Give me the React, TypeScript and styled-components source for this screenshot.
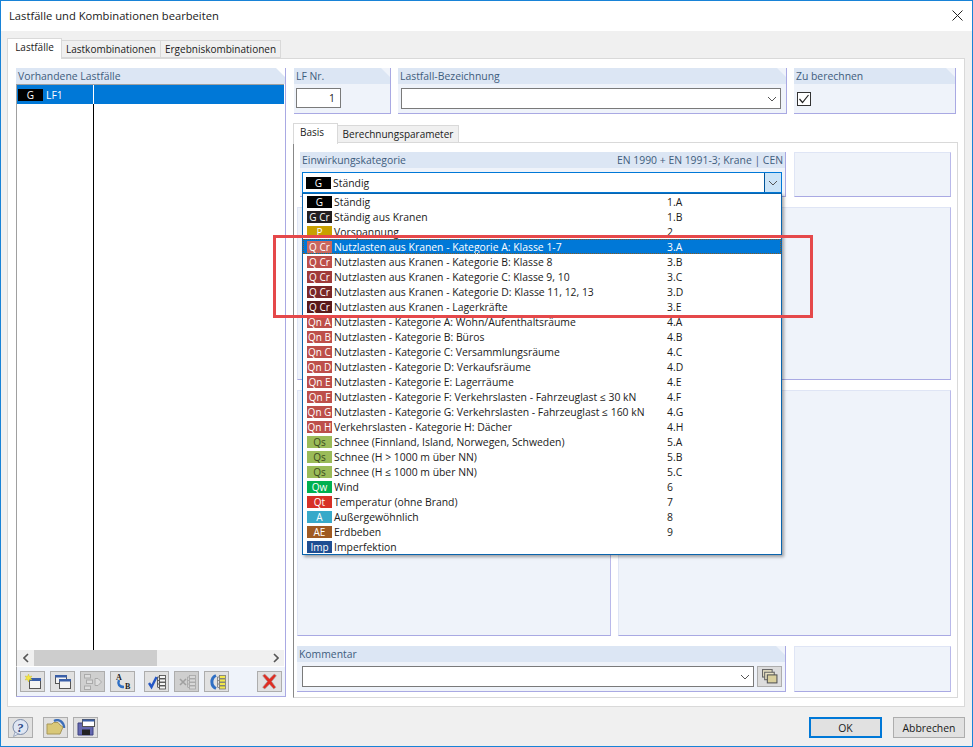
import styled, { createGlobalStyle } from "styled-components";

const GlobalStyle = createGlobalStyle`
  html, body {
    margin: 0;
    padding: 0;
    background: #f0f0f0;
  }
  * {
    box-sizing: border-box;
  }
`;

const Window = styled.div`
  position: relative;
  width: 973px;
  height: 747px;
  display: flex;
  flex-direction: column;
  background: #f0f0f0;
  border: 1px solid #1883d7;
  font-family: "Open Sans", "Liberation Sans", sans-serif;
  font-size: 10.4px;
  color: #1a1a1a;
  overflow: hidden;
`;

const TitleBar = styled.div`
  height: 30px;
  flex: none;
  display: flex;
  align-items: center;
  justify-content: space-between;
  padding: 0 9px 2px 8px;
  background: #fff;
  font-size: 11.2px;
`;

const Body = styled.div`
  flex: 1;
  display: flex;
  flex-direction: column;
  padding: 7px 7px 0 6px;
`;

const TabRow = styled.div`
  display: flex;
  align-items: flex-end;
  height: 20px;
  flex: none;
  position: relative;
  z-index: 1;
`;

const Tab = styled.div<{ $active?: boolean; $w: number }>`
  width: ${(p) => p.$w}px;
  height: ${(p) => (p.$active ? 21 : 18)}px;
  margin-bottom: ${(p) => (p.$active ? -1 : 0)}px;
  padding-top: 1px;
  text-align: center;
  font-size: 10px;
  background: ${(p) => (p.$active ? "#fff" : "#f0f0f0")};
  border: 1px solid #d9d9d9;
  border-bottom: ${(p) => (p.$active ? "none" : "1px solid #d9d9d9")};
  border-left: ${(p) => (p.$active ? "1px solid #d9d9d9" : "none")};
  white-space: nowrap;
`;

const BasisTab = styled(Tab)`
  text-align: left;
  padding-left: 6px;
`;

const OuterPane = styled.div`
  height: 649px;
  flex: none;
  display: flex;
  gap: 7px;
  padding: 9px 6px 0 8px;
  background: #fff;
  border: 1px solid #d9d9d9;
`;

const GroupHead = styled.div<{ $square?: boolean }>`
  height: 16px;
  flex: none;
  padding: 0 2px 1px;
  display: flex;
  justify-content: space-between;
  align-items: center;
  background: #dce6f4;
  color: #3f5d7d;
  white-space: nowrap;
  clip-path: ${(p) =>
    p.$square
      ? "none"
      : "polygon(0 0, calc(100% - 9px) 0, 100% 9px, 100% 100%, 0 100%)"};
`;

const LeftColumn = styled.div`
  width: 270px;
  height: 629px;
  flex: none;
  display: flex;
  flex-direction: column;
  border-right: 1px solid #a9a9e3;
  border-bottom: 1px solid #a9a9e3;
`;

const CaseList = styled.div`
  flex: 1;
  display: flex;
  flex-direction: column;
  margin-right: 1px;
  border-top: 1px solid #a0a0a0;
  border-left: 1px solid #a0a0a0;
  background: #fff;
  min-height: 0;
`;

const CaseRow = styled.div`
  height: 19px;
  flex: none;
  display: flex;
  align-items: center;
  background: #0078d7;
  color: #fff;
`;

const CaseBadgeCell = styled.div`
  width: 77px;
  flex: none;
  height: 100%;
  display: flex;
  align-items: center;
  gap: 1px;
  padding-left: 1px;
  border-right: 1px solid #fff;
`;

const CaseColumns = styled.div`
  flex: 1;
  min-height: 0;
`;

const CaseDivider = styled.div`
  width: 77px;
  height: 100%;
  border-right: 1px solid #000;
`;

const ScrollBar = styled.div`
  height: 16px;
  flex: none;
  display: flex;
  align-items: center;
  justify-content: space-between;
  background: #f0f0f0;
`;

const ScrollThumb = styled.div`
  width: 123px;
  height: 16px;
  margin-right: auto;
  background: #cdcdcd;
`;

const ScrollArrow = styled.div`
  width: 17px;
  height: 16px;
  display: flex;
  align-items: center;
  justify-content: center;
`;

const ToolBar = styled.div`
  height: 30px;
  flex: none;
  display: flex;
  align-items: center;
  padding: 0 0 0 3px;
  background: #eff3fa;
  border-top: 1px solid #fff;
  border-left: 1px solid #a0a0a0;
`;

const IconButton = styled.div<{ $disabled?: boolean; $gap?: number }>`
  width: 25px;
  height: 21px;
  flex: none;
  margin-left: ${(p) => p.$gap ?? 0}px;
  display: flex;
  align-items: center;
  justify-content: center;
  background: ${(p) => (p.$disabled ? "#cfcfcf" : "#e1e1e1")};
  border: 1px solid #adadad;
`;

const RightColumn = styled.div`
  flex: 1;
  min-width: 0;
  display: flex;
  flex-direction: column;
`;

const TopRow = styled.div`
  display: flex;
  height: 46px;
  flex: none;
  gap: 7px;
  margin-left: 1px;
`;

const Group = styled.div<{ $w: number }>`
  width: ${(p) => p.$w}px;
  flex: none;
  display: flex;
  flex-direction: column;
  background: #eff3fa;
  border-right: 1px solid #a9a9e3;
  border-bottom: 1px solid #a9a9e3;
`;

const GroupBody = styled.div`
  flex: 1;
  display: flex;
  align-items: flex-start;
  padding: 4px 5px 0 2px;
`;

const NumberField = styled.div`
  width: 45px;
  height: 20px;
  padding: 2px 5px;
  text-align: right;
  background: #fff;
  border: 1px solid #7a7a7a;
`;

const ComboField = styled.div`
  flex: 1;
  height: 21px;
  margin-left: 1px;
  display: flex;
  align-items: center;
  justify-content: flex-end;
  padding-right: 3px;
  background: #fff;
  border: 1px solid #7a7a7a;
`;

const CheckBox = styled.div`
  width: 14px;
  height: 14px;
  margin: 4px 0 0 1px;
  display: flex;
  align-items: center;
  justify-content: center;
  background: #fff;
  border: 1px solid #333;
`;

const InnerTabs = styled.div`
  display: flex;
  align-items: flex-end;
  height: 20px;
  flex: none;
  margin-top: 9px;
  position: relative;
  z-index: 1;
`;

const InnerPane = styled.div`
  height: 556px;
  flex: none;
  display: flex;
  flex-direction: column;
  padding: 9px 6px 0 3px;
  background: #fff;
  border: 1px solid #d9d9d9;
  border-left: 1px solid #888;
  margin-top: -1px;
`;

const PaneRow = styled.div<{ $h: number; $mt?: number }>`
  display: flex;
  gap: 7px;
  height: ${(p) => p.$h}px;
  flex: none;
  margin-top: ${(p) => p.$mt ?? 0}px;
`;

const PlainPanel = styled.div<{ $w: number; $ml?: number }>`
  width: ${(p) => p.$w}px;
  flex: none;
  margin-left: ${(p) => p.$ml ?? 0}px;
  background: #eff3fa;
  border: 1px solid #dfe5f5;
  border-right-color: #b9b9ea;
  border-bottom-color: #a9a9e3;
`;

const CategoryGroup = styled(Group)`
  margin-left: 3px;
  margin-right: 1px;
`;

const CategoryBody = styled(GroupBody)`
  padding-right: 3px;
`;

const CategoryField = styled.div`
  flex: 1;
  height: 21px;
  display: flex;
  align-items: center;
  background: #fff;
  border: 1px solid #0078d7;
  padding-left: 3px;
`;

const FocusButton = styled.div`
  width: 17px;
  height: 19px;
  margin-left: auto;
  display: flex;
  align-items: center;
  justify-content: center;
  background: #cce4f7;
  border-left: 1px solid #005499;
`;

const CommentBody = styled(GroupBody)`
  gap: 3px;
  padding: 4px 3px 0 4px;
`;

const SmallButton = styled.div`
  width: 25px;
  height: 21px;
  flex: none;
  display: flex;
  align-items: center;
  justify-content: center;
  background: #dcdcdc;
  border: 1px solid #adadad;
`;

const Footer = styled.div`
  flex: 1;
  display: flex;
  align-items: flex-start;
  padding: 10px 0 0 1px;
`;

const TextButton = styled.div<{ $primary?: boolean }>`
  width: ${(p) => (p.$primary ? 73 : 72)}px;
  height: 21px;
  margin-left: ${(p) => (p.$primary ? "auto" : "11px")};
  display: flex;
  align-items: center;
  justify-content: center;
  background: #e1e1e1;
  border: ${(p) => (p.$primary ? "2px solid #0078d7" : "1px solid #adadad")};
`;

const Dropdown = styled.div`
  position: absolute;
  left: 301px;
  top: 192px;
  width: 480px;
  height: 362px;
  background: #fff;
  border: 1px solid #0a64ad;
  box-shadow: 2px 2px 3px rgba(0, 0, 0, 0.35);
  z-index: 3;
`;

const ListRow = styled.div<{ $selected?: boolean }>`
  height: 15px;
  display: flex;
  align-items: center;
  padding-left: 4px;
  white-space: nowrap;
  background: ${(p) => (p.$selected ? "#0078d7" : "transparent")};
  color: ${(p) => (p.$selected ? "#fff" : "#1a1a1a")};
  outline: ${(p) => (p.$selected ? "1px dotted #8a5a1e" : "none")};
  outline-offset: -1px;
`;

const Badge = styled.span<{ $bg: string; $fg?: string }>`
  width: 25px;
  height: 12px;
  flex: none;
  margin-right: 2px;
  display: flex;
  align-items: center;
  justify-content: center;
  background: ${(p) => p.$bg};
  color: ${(p) => p.$fg ?? "#fff"};
  font-size: 10px;
  line-height: 12px;
`;

const RowLabel = styled.span`
  width: 333px;
  flex: none;
`;

const Highlight = styled.div`
  position: absolute;
  left: 272px;
  top: 234px;
  width: 540px;
  height: 83px;
  border: 3px solid #e5484a;
  z-index: 4;
  pointer-events: none;
`;

const Chevron = () => (
  <svg width="10" height="6" viewBox="0 0 10 6" fill="none" stroke="#555" strokeWidth="1">
    <path d="M1 1l4 4 4-4" />
  </svg>
);

const TreeBoxes = ({ fill, stroke }: { fill: string; stroke: string }) => (
  <g fill={fill} stroke={stroke} strokeWidth=".8">
    <path d="M9.500 3v10M9.500 3h2M9.500 6.500h2M9.500 10h2M9.500 13.500h2" fill="none" />
    <rect x="11.500" y="1.500" width="6" height="3" />
    <rect x="11.500" y="5" width="6" height="3" />
    <rect x="11.500" y="8.500" width="6" height="3" />
    <rect x="11.500" y="12" width="6" height="3" />
  </g>
);

const categories = [
  ["G", "#000000", "Ständig", "1.A"],
  ["G Cr", "#231f20", "Ständig aus Kranen", "1.B"],
  ["P", "#c8a000", "Vorspannung", "2"],
  ["Q Cr", "#c9675f", "Nutzlasten aus Kranen - Kategorie A: Klasse 1-7", "3.A"],
  ["Q Cr", "#bd4f4a", "Nutzlasten aus Kranen - Kategorie B: Klasse 8", "3.B"],
  ["Q Cr", "#a03b39", "Nutzlasten aus Kranen - Kategorie C: Klasse 9, 10", "3.C"],
  ["Q Cr", "#7a2727", "Nutzlasten aus Kranen - Kategorie D: Klasse 11, 12, 13", "3.D"],
  ["Q Cr", "#5a1a1a", "Nutzlasten aus Kranen - Lagerkräfte", "3.E"],
  ["Qn A", "#bd4f4a", "Nutzlasten - Kategorie A: Wohn/Aufenthaltsräume", "4.A"],
  ["Qn B", "#bd4f4a", "Nutzlasten - Kategorie B: Büros", "4.B"],
  ["Qn C", "#bd4f4a", "Nutzlasten - Kategorie C: Versammlungsräume", "4.C"],
  ["Qn D", "#bd4f4a", "Nutzlasten - Kategorie D: Verkaufsräume", "4.D"],
  ["Qn E", "#bd4f4a", "Nutzlasten - Kategorie E: Lagerräume", "4.E"],
  ["Qn F", "#bd4f4a", "Nutzlasten - Kategorie F: Verkehrslasten - Fahrzeuglast ≤ 30 kN", "4.F"],
  ["Qn G", "#bd4f4a", "Nutzlasten - Kategorie G: Verkehrslasten - Fahrzeuglast ≤ 160 kN", "4.G"],
  ["Qn H", "#bd4f4a", "Verkehrslasten - Kategorie H: Dächer", "4.H"],
  ["Qs", "#9bbb59", "Schnee (Finnland, Island, Norwegen, Schweden)", "5.A"],
  ["Qs", "#9bbb59", "Schnee (H > 1000 m über NN)", "5.B"],
  ["Qs", "#9bbb59", "Schnee (H ≤ 1000 m über NN)", "5.C"],
  ["Qw", "#00b050", "Wind", "6"],
  ["Qt", "#d73027", "Temperatur (ohne Brand)", "7"],
  ["A", "#38a9c9", "Außergewöhnlich", "8"],
  ["AE", "#a05a22", "Erdbeben", "9"],
  ["Imp", "#1f4e92", "Imperfektion", ""],
];

export default function App() {
  return (
    <Window>
      <GlobalStyle />
      <TitleBar>
        <span>Lastfälle und Kombinationen bearbeiten</span>
        <svg width="11" height="11" viewBox="0 0 11 11" stroke="#222" strokeWidth="1">
          <path d="M.5.5l10 10M10.5.5l-10 10" />
        </svg>
      </TitleBar>
      <Body>
        <TabRow>
          <Tab $active $w={55}>Lastfälle</Tab>
          <Tab $w={99}>Lastkombinationen</Tab>
          <Tab $w={120}>Ergebniskombinationen</Tab>
        </TabRow>
        <OuterPane>
          <LeftColumn>
            <GroupHead>Vorhandene Lastfälle</GroupHead>
            <CaseList>
              <CaseRow>
                <CaseBadgeCell>
                  <Badge $bg="#000">G</Badge>
                  LF1
                </CaseBadgeCell>
              </CaseRow>
              <CaseColumns>
                <CaseDivider />
              </CaseColumns>
              <ScrollBar>
                <ScrollArrow>
                  <svg width="6" height="10" viewBox="0 0 6 10" fill="none" stroke="#555" strokeWidth="1.6">
                    <path d="M5 1L1 5l4 4" />
                  </svg>
                </ScrollArrow>
                <ScrollThumb />
                <ScrollArrow>
                  <svg width="6" height="10" viewBox="0 0 6 10" fill="none" stroke="#555" strokeWidth="1.6">
                    <path d="M1 1l4 4-4 4" />
                  </svg>
                </ScrollArrow>
              </ScrollBar>
            </CaseList>
            <ToolBar>
              <IconButton>
                <svg width="18" height="16" viewBox="0 0 18 16">
                  <rect x="5.500" y="4.500" width="11" height="10" fill="#f4f4f4" stroke="#555" />
                  <rect x="5" y="4" width="12" height="3" fill="#3a5fa8" />
                  <path d="M4.500 0l1 2.500 2.500-.5L6.500 4 8 6 5.500 5.500 4.500 8l-1-2.500L1 6l1.500-2L1 2l2.500.5z" fill="#f5e642" stroke="#c8b820" strokeWidth=".4" />
                </svg>
              </IconButton>
              <IconButton $gap={5}>
                <svg width="18" height="16" viewBox="0 0 18 16">
                  <rect x="1.500" y="1.500" width="11" height="8" fill="#f4f4f4" stroke="#555" />
                  <rect x="1" y="1" width="12" height="2.500" fill="#3a5fa8" />
                  <rect x="5.500" y="5.500" width="11" height="9" fill="#f4f4f4" stroke="#555" />
                  <rect x="5" y="5" width="12" height="2.500" fill="#3a5fa8" />
                </svg>
              </IconButton>
              <IconButton $disabled $gap={5}>
                <svg width="18" height="16" viewBox="0 0 18 16" fill="#ddd" stroke="#aaa">
                  <rect x=".5" y=".5" width="6" height="3.500" />
                  <rect x="2.500" y="6" width="6" height="3.500" />
                  <rect x=".5" y="12" width="6" height="3.500" />
                  <path d="M11 4.500h3l3.500 3.500-3.500 3.500h-3z" />
                </svg>
              </IconButton>
              <IconButton $gap={5}>
                <svg width="18" height="17" viewBox="0 0 18 17">
                  <text x="2" y="7" fontSize="8" fontWeight="700" fontFamily="Liberation Serif, serif" fill="#222">A</text>
                  <path d="M5 7c-1.500 4 0 7 5 7" fill="none" stroke="#2f6fc4" strokeWidth="2.400" />
                  <text x="11" y="16" fontSize="8" fontWeight="700" fontFamily="Liberation Serif, serif" fill="#222">B</text>
                </svg>
              </IconButton>
              <IconButton $gap={9}>
                <svg width="18" height="16" viewBox="0 0 18 16" fill="none">
                  <TreeBoxes fill="#f4f4f4" stroke="#444" />
                  <path d="M1 9l2.500 4L8.500 3" stroke="#2457c5" strokeWidth="2.400" />
                </svg>
              </IconButton>
              <IconButton $disabled $gap={5}>
                <svg width="18" height="16" viewBox="0 0 18 16" fill="none">
                  <TreeBoxes fill="#d8d8d8" stroke="#a5a5a5" />
                  <path d="M2 5l6 6M8 5l-6 6" stroke="#a0a0a0" strokeWidth="1.600" />
                </svg>
              </IconButton>
              <IconButton $gap={5}>
                <svg width="18" height="16" viewBox="0 0 18 16" fill="none">
                  <TreeBoxes fill="#f2e84a" stroke="#777" />
                  <path d="M8 1.500C2.500 4 2.500 12 8 14.500" stroke="#2f6fc4" strokeWidth="3" />
                </svg>
              </IconButton>
              <IconButton $gap={28}>
                <svg width="17" height="17" viewBox="0 0 16 16">
                  <path d="M1.500 2.500l2-1.500L8 5.500 12.500 1l2 1.500L10 8l4 5.500-2 1.500L8 10.500 3.500 15l-2-1.500L6 8z" fill="#e02b20" stroke="#a8a8a8" strokeWidth=".6" />
                </svg>
              </IconButton>
            </ToolBar>
          </LeftColumn>
          <RightColumn>
            <TopRow>
              <Group $w={97}>
                <GroupHead>LF Nr.</GroupHead>
                <GroupBody>
                  <NumberField>1</NumberField>
                </GroupBody>
              </Group>
              <Group $w={389}>
                <GroupHead>Lastfall-Bezeichnung</GroupHead>
                <GroupBody>
                  <ComboField>
                    <Chevron />
                  </ComboField>
                </GroupBody>
              </Group>
              <Group $w={162}>
                <GroupHead>Zu berechnen</GroupHead>
                <GroupBody>
                  <CheckBox>
                    <svg width="12" height="12" viewBox="0 0 12 12" fill="none" stroke="#222" strokeWidth="1.200">
                      <path d="M1.500 6l3 3.500 6-7.500" />
                    </svg>
                  </CheckBox>
                </GroupBody>
              </Group>
            </TopRow>
            <InnerTabs>
              <BasisTab $active $w={45}>Basis</BasisTab>
              <Tab $w={121}>Berechnungsparameter</Tab>
            </InnerTabs>
            <InnerPane>
              <PaneRow $h={45}>
                <CategoryGroup $w={486}>
                  <GroupHead $square>
                    <span>Einwirkungskategorie</span>
                    <span>EN 1990 + EN 1991-3; Krane | CEN</span>
                  </GroupHead>
                  <CategoryBody>
                    <CategoryField>
                      <Badge $bg="#000">G</Badge>
                      Ständig
                      <FocusButton>
                        <Chevron />
                      </FocusButton>
                    </CategoryField>
                  </CategoryBody>
                </CategoryGroup>
                <PlainPanel $w={157} />
              </PaneRow>
              <PaneRow $h={173} $mt={10}>
                <PlainPanel $w={314} />
                <PlainPanel $w={333} />
              </PaneRow>
              <PaneRow $h={246} $mt={10}>
                <PlainPanel $w={314} />
                <PlainPanel $w={333} />
              </PaneRow>
              <PaneRow $h={46} $mt={10}>
                <Group $w={489}>
                  <GroupHead>Kommentar</GroupHead>
                  <CommentBody>
                    <ComboField>
                      <Chevron />
                    </ComboField>
                    <SmallButton>
                      <svg width="16" height="15" viewBox="0 0 15 14">
                        <rect x=".5" y=".5" width="9" height="7" fill="#e8e2c4" stroke="#666" />
                        <rect x="2.500" y="3" width="9" height="7" fill="#e8e2c4" stroke="#666" />
                        <rect x="5" y="5.500" width="9" height="7.500" fill="#d9cf9c" stroke="#555" />
                      </svg>
                    </SmallButton>
                  </CommentBody>
                </Group>
                <PlainPanel $w={157} $ml={1} />
              </PaneRow>
            </InnerPane>
          </RightColumn>
        </OuterPane>
        <Footer>
          <IconButton>
            <svg width="19" height="18" viewBox="0 0 18 18">
              <circle cx="9" cy="8" r="7.500" fill="#dfe6f3" stroke="#7a8aa8" />
              <path d="M3.500 13l-1.500 4.500 5-2.500z" fill="#dfe6f3" stroke="#7a8aa8" strokeWidth=".6" />
              <text x="5.500" y="13" fontSize="13" fontStyle="italic" fontWeight="700" fontFamily="Liberation Serif, serif" fill="#2c4a86">?</text>
            </svg>
          </IconButton>
          <IconButton $gap={10}>
            <svg width="20" height="17" viewBox="0 0 20 17">
              <path d="M8 2c5-2.500 10 1 10 7" fill="none" stroke="#3d6fb8" strokeWidth="2.400" />
              <path d="M1 5h5l1.500-1.500H12L14 6l3 2-3 7H1z" fill="#d9c878" stroke="#a8985a" />
            </svg>
          </IconButton>
          <IconButton $gap={5}>
            <svg width="18" height="17" viewBox="0 0 18 17">
              <path d="M1 4h15v12H1z" fill="#6468b0" stroke="#3d4180" />
              <rect x="5.500" y=".5" width="12" height="7" fill="#fff" stroke="#555" />
              <rect x="5.500" y=".5" width="12" height="2" fill="#3a5fa8" />
              <rect x="5" y="10.500" width="8" height="5.500" fill="#222" />
            </svg>
          </IconButton>
          <TextButton $primary>OK</TextButton>
          <TextButton>Abbrechen</TextButton>
        </Footer>
      </Body>
      <Dropdown>
        {categories.map(([code, color, label, number], index) => (
          <ListRow key={label} $selected={index === 3}>
            <Badge $bg={color} $fg={code === "Qs" ? "#3a4a20" : "#fff"}>
              {code}
            </Badge>
            <RowLabel>{label}</RowLabel>
            <span>{number}</span>
          </ListRow>
        ))}
      </Dropdown>
      <Highlight />
    </Window>
  );
}
